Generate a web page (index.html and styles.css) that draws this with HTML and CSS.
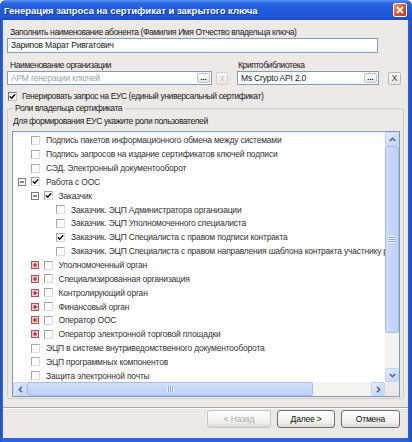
FILE: index.html
```html
<!DOCTYPE html>
<html lang="ru">
<head>
<meta charset="utf-8">
<title>Генерация запроса</title>
<link rel="stylesheet" href="styles.css">
</head>
<body>
<div class="window">
  <div class="titlebar">
    <span class="title">Генерация запроса на сертификат и закрытого ключа</span>
    <span class="close"><svg width="8" height="8" viewBox="0 0 8 8"><path d="M1 1L7 7M7 1L1 7" stroke="#fff" stroke-width="1.8" fill="none"/></svg></span>
  </div>
  <div class="client">
    <div class="label l1">Заполнить наименование абонента (Фамилия Имя Отчество владельца ключа)</div>
    <div class="textbox tb1">Зарипов Марат Ривгатович</div>
    <div class="pickers">
      <div class="picker org">
        <div class="label plabel">Наименование организации</div>
        <div class="pick-row">
          <div class="textbox combo"><span class="val muted">АРМ генерации ключей</span><span class="dots">...</span></div>
          <span class="xbtn disabled">x</span>
        </div>
      </div>
      <div class="picker crypto">
        <div class="label plabel">Криптобиблиотека</div>
        <div class="pick-row">
          <div class="textbox combo"><span class="val">Ms Crypto API 2.0</span><span class="dots">...</span></div>
          <span class="xbtn">X</span>
        </div>
      </div>
    </div>
    <div class="check-row"><span class="cb on"><svg width="7" height="7" viewBox="0 0 7 7"><path d="M0.8 3.3L2.7 5.2L6.2 1.2" stroke="#111" stroke-width="1.5" fill="none"/></svg></span><span>Генерировать запрос на ЕУС (единый универсальный сертификат)</span></div>
    <fieldset class="group">
      <legend>Роли владельца сертификата</legend>
      <div class="hint">Для формирования ЕУС укажите роли пользователей</div>
      <div class="tree">
        <div class="tree-body">
          <div class="row lvl0"><span class="exp"></span><span class="cb"></span><span class="txt">Подпись пакетов информационного обмена между системами</span></div>
          <div class="row lvl0"><span class="exp"></span><span class="cb"></span><span class="txt">Подпись запросов на издание сертификатов ключей подписи</span></div>
          <div class="row lvl0"><span class="exp"></span><span class="cb"></span><span class="txt">СЭД. Электронный документооборот</span></div>
          <div class="row lvl0"><span class="exp"><svg width="8" height="8" viewBox="0 0 8 8"><rect x="0.5" y="0.5" width="7" height="7" fill="#fff" stroke="#7b7b7b"/><path d="M2 4H6" stroke="#111"/></svg></span><span class="cb on"><svg width="7" height="7" viewBox="0 0 7 7"><path d="M0.8 3.3L2.7 5.2L6.2 1.2" stroke="#111" stroke-width="1.5" fill="none"/></svg></span><span class="txt">Работа с ООС</span></div>
          <div class="row lvl1"><span class="exp"><svg width="8" height="8" viewBox="0 0 8 8"><rect x="0.5" y="0.5" width="7" height="7" fill="#fff" stroke="#7b7b7b"/><path d="M2 4H6" stroke="#111"/></svg></span><span class="cb on"><svg width="7" height="7" viewBox="0 0 7 7"><path d="M0.8 3.3L2.7 5.2L6.2 1.2" stroke="#111" stroke-width="1.5" fill="none"/></svg></span><span class="txt">Заказчик</span></div>
          <div class="row lvl2"><span class="exp"></span><span class="cb"></span><span class="txt">Заказчик. ЭЦП Администратора организации</span></div>
          <div class="row lvl2"><span class="exp"></span><span class="cb"></span><span class="txt">Заказчик. ЭЦП Уполномоченного специалиста</span></div>
          <div class="row lvl2"><span class="exp"></span><span class="cb on"><svg width="7" height="7" viewBox="0 0 7 7"><path d="M0.8 3.3L2.7 5.2L6.2 1.2" stroke="#111" stroke-width="1.5" fill="none"/></svg></span><span class="txt">Заказчик. ЭЦП Специалиста с правом подписи контракта</span></div>
          <div class="row lvl2"><span class="exp"></span><span class="cb"></span><span class="txt">Заказчик. ЭЦП Специалиста с правом направления шаблона контракта участнику размещения заказа</span></div>
          <div class="row lvl1"><span class="exp"><svg width="8" height="8" viewBox="0 0 8 8"><rect x="0.5" y="0.5" width="7" height="7" fill="#f4c4c6" stroke="#a8545a"/><path d="M2 4H6M4 2V6" stroke="#9a1020"/></svg></span><span class="cb"></span><span class="txt">Уполномоченный орган</span></div>
          <div class="row lvl1"><span class="exp"><svg width="8" height="8" viewBox="0 0 8 8"><rect x="0.5" y="0.5" width="7" height="7" fill="#f4c4c6" stroke="#a8545a"/><path d="M2 4H6M4 2V6" stroke="#9a1020"/></svg></span><span class="cb"></span><span class="txt">Специализированная организация</span></div>
          <div class="row lvl1"><span class="exp"><svg width="8" height="8" viewBox="0 0 8 8"><rect x="0.5" y="0.5" width="7" height="7" fill="#f4c4c6" stroke="#a8545a"/><path d="M2 4H6M4 2V6" stroke="#9a1020"/></svg></span><span class="cb"></span><span class="txt">Контролирующий орган</span></div>
          <div class="row lvl1"><span class="exp"><svg width="8" height="8" viewBox="0 0 8 8"><rect x="0.5" y="0.5" width="7" height="7" fill="#f4c4c6" stroke="#a8545a"/><path d="M2 4H6M4 2V6" stroke="#9a1020"/></svg></span><span class="cb"></span><span class="txt">Финансовый орган</span></div>
          <div class="row lvl1"><span class="exp"><svg width="8" height="8" viewBox="0 0 8 8"><rect x="0.5" y="0.5" width="7" height="7" fill="#f4c4c6" stroke="#a8545a"/><path d="M2 4H6M4 2V6" stroke="#9a1020"/></svg></span><span class="cb"></span><span class="txt">Оператор ООС</span></div>
          <div class="row lvl1"><span class="exp"><svg width="8" height="8" viewBox="0 0 8 8"><rect x="0.5" y="0.5" width="7" height="7" fill="#f4c4c6" stroke="#a8545a"/><path d="M2 4H6M4 2V6" stroke="#9a1020"/></svg></span><span class="cb"></span><span class="txt">Оператор электронной торговой площадки</span></div>
          <div class="row lvl0"><span class="exp"></span><span class="cb"></span><span class="txt">ЭЦП в системе внутриведомственного документооборота</span></div>
          <div class="row lvl0"><span class="exp"></span><span class="cb"></span><span class="txt">ЭЦП программных компонентов</span></div>
          <div class="row lvl0"><span class="exp"></span><span class="cb"></span><span class="txt">Защита электронной почты</span></div>
        </div>
        <div class="vscroll">
          <span class="sbtn"><svg width="7" height="5" viewBox="0 0 7 5"><path d="M0.8 4L3.5 1.3L6.2 4" stroke="#4d6185" stroke-width="1.5" fill="none"/></svg></span>
          <span class="thumb vthumb"><span class="grip vgrip"></span></span>
          <span class="track"></span>
          <span class="sbtn"><svg width="7" height="5" viewBox="0 0 7 5"><path d="M0.8 1L3.5 3.7L6.2 1" stroke="#4d6185" stroke-width="1.5" fill="none"/></svg></span>
        </div>
        <div class="hscroll">
          <span class="sbtn"><svg width="5" height="7" viewBox="0 0 5 7"><path d="M4 0.8L1.3 3.5L4 6.2" stroke="#4d6185" stroke-width="1.5" fill="none"/></svg></span>
          <span class="thumb hthumb"><span class="grip hgrip"></span></span>
          <span class="track"></span>
          <span class="sbtn"><svg width="5" height="7" viewBox="0 0 5 7"><path d="M1 0.8L3.7 3.5L1 6.2" stroke="#4d6185" stroke-width="1.5" fill="none"/></svg></span>
        </div>
        <div class="corner"></div>
      </div>
    </fieldset>
    <div class="sep"></div>
    <div class="buttons">
      <span class="btn back disabled">&lt; Назад</span>
      <span class="btn next">Далее &gt;</span>
      <span class="btn cancel">Отмена</span>
    </div>
  </div>
</div>
</body>
</html>
```
FILE: styles.css
```css
* { box-sizing: border-box; }
html, body { margin: 0; padding: 0; }
body {
  width: 412px;
  height: 442px;
  overflow: hidden;
  background: #fff;
  font-family: "Liberation Sans", Arial, sans-serif;
  font-size: 8.5px;
  color: #202020;
}
.window {
  width: 412px;
  height: 442px;
  display: flex;
  flex-direction: column;
  background: linear-gradient(90deg, #1a4cc4 0, #2c62dc 2px, #2c62dc 408px, #1a4cc4 100%);
  border-radius: 6px 6px 0 0;
  overflow: hidden;
}
.titlebar {
  height: 20px;
  flex: none;
  display: flex;
  align-items: center;
  justify-content: space-between;
  padding: 0 5px 0 4px;
  background: linear-gradient(#5b93f0 0, #2d68e2 3px, #215cdc 45%, #1e57d6 80%, #1a4dc6 100%);
}
.title {
  color: #fff;
  font-weight: bold;
  font-size: 9.5px;
  letter-spacing: 0;
  text-shadow: 1px 1px 0 #0e3595;
  white-space: nowrap;
}
.close {
  width: 14px;
  height: 14px;
  border: 1px solid #f4f4f4;
  border-radius: 2px;
  background: linear-gradient(135deg, #f39a78, #dc5126 55%, #c43d16);
  display: flex;
  align-items: center;
  justify-content: center;
}
.client {
  flex: 1;
  margin: 0 4px 4px 3px;
  background: #ece9e6;
  display: flex;
  flex-direction: column;
  padding: 6px 0 0 4px;
  letter-spacing: -0.4px;
}
.label {
  line-height: 12px;
  white-space: nowrap;
}
.l1 { padding-left: 3px; }
.textbox {
  background: #fff;
  border: 1px solid #7f9db9;
  white-space: nowrap;
  overflow: hidden;
}
.tb1 {
  width: 371px;
  height: 15px;
  line-height: 13px;
  padding-left: 3px;
  letter-spacing: -0.2px;
}
.pickers {
  display: flex;
  margin-top: 6px;
}
.picker.org { width: 221px; }
.picker.crypto { margin-left: 9px; width: 165px; }
.org .plabel { padding-left: 3px; }
.crypto .plabel { padding-left: 1px; }
.pick-row {
  display: flex;
  align-items: center;
  height: 14px;
}
.combo {
  display: flex;
  height: 14px;
  line-height: 12px;
  letter-spacing: -0.2px;
}
.org .combo { width: 205px; }
.crypto .combo { width: 142px; }
.combo .val { flex: 1; padding-left: 3px; overflow: hidden; }
.muted { color: #a3a3a3; }
.dots {
  width: 13px;
  margin: 1px;
  border: 1px solid #c3c3c3;
  border-radius: 2px;
  background: linear-gradient(#fdfdfd, #e6e4df);
  font-weight: bold;
  font-size: 8px;
  letter-spacing: 0;
  line-height: 7px;
  text-align: center;
  color: #222;
}
.xbtn {
  height: 13px;
  border: 1px solid #b9b8b4;
  border-radius: 2px;
  background: linear-gradient(#fbfbfa, #e9e7e2);
  text-align: center;
  line-height: 11px;
  font-size: 8.5px;
  letter-spacing: 0;
  color: #333;
}
.org .xbtn { width: 12px; margin-left: 4px; }
.crypto .xbtn { width: 13px; margin-left: 9px; }
.xbtn.disabled { color: #bdbcb7; border-color: #d2d0cb; }
.check-row {
  display: flex;
  align-items: center;
  height: 12px;
  margin-top: 5px;
  white-space: nowrap;
}
.cb {
  width: 9px;
  height: 9px;
  flex: none;
  background: #fff;
  border: 1px solid #a5a5a5;
  border-right-color: #dcdcdc;
  border-bottom-color: #dcdcdc;
  display: flex;
  align-items: center;
  justify-content: center;
}
.check-row .cb { margin-left: 1px; margin-right: 5px; border-color: #707070; border-right-color: #c8c8c8; border-bottom-color: #c8c8c8; }
.group {
  margin: 0;
  width: 397px;
  min-inline-size: 0;
  padding: 0 3px 1px 4px;
  border: 1px solid #cfcdc5;
  border-radius: 3px;
}
.group legend {
  padding: 0 2px;
  margin-left: 1px;
  line-height: 12px;
  font-size: 8.5px;
}
.hint {
  margin-top: 1px;
  margin-left: 1px;
  line-height: 12px;
  white-space: nowrap;
}
.tree {
  margin-top: 4px;
  height: 266px;
  border: 1px solid #7f9db9;
  background: #fff;
  display: grid;
  grid-template-columns: 1fr 14px;
  grid-template-rows: 1fr 14px;
  overflow: hidden;
}
.tree-body {
  overflow: hidden;
  padding-top: 1.5px;
  color: #333;
  min-width: 0;
  letter-spacing: -0.2px;
}
.row {
  height: 13.85px;
  display: flex;
  align-items: center;
  white-space: nowrap;
}
.lvl0 { padding-left: 5px; }
.lvl1 { padding-left: 17.5px; }
.lvl2 { padding-left: 30px; }
.exp {
  width: 13px;
  flex: none;
  display: flex;
  align-items: center;
}
.exp svg { display: block; }
.row .cb { margin-right: 6px; }
.txt { line-height: 12px; }
.vscroll, .hscroll {
  display: flex;
  background: #f4f3ee;
}
.vscroll { flex-direction: column; }
.sbtn {
  width: 14px;
  height: 14px;
  flex: none;
  border: 1px solid #c4d3f6;
  border-radius: 2px;
  background: linear-gradient(135deg, #e4ecfd, #c3d4fb);
  display: flex;
  align-items: center;
  justify-content: center;
}
.thumb {
  flex: none;
  border: 1px solid #a8bdef;
  border-radius: 2px;
  background: linear-gradient(90deg, #d0ddfb, #bed0f8);
  display: flex;
  align-items: center;
  justify-content: center;
}
.vthumb { height: 187px; width: 14px; }
.hthumb { width: 286px; height: 14px; background: linear-gradient(#d3e0fc, #bccef8); }
.track { flex: 1; }
.grip { display: block; }
.vgrip {
  width: 6px;
  height: 7px;
  background: repeating-linear-gradient(#eef3fe 0 1px, #8fa8e0 1px 2px);
}
.hgrip {
  width: 7px;
  height: 6px;
  background: repeating-linear-gradient(90deg, #eef3fe 0 1px, #8fa8e0 1px 2px);
}
.corner { background: #ece9e6; }
.sep {
  margin-top: 8px;
  margin-left: -4px;
  height: 2px;
  border-top: 1px solid #a9a7a2;
  border-bottom: 1px solid #fff;
}
.buttons {
  display: flex;
  justify-content: flex-end;
  gap: 6px;
  margin-top: 1px;
  padding-right: 8px;
  letter-spacing: -0.2px;
}
.btn {
  height: 18px;
  border: 1px solid #6f6e6b;
  border-radius: 3px;
  background: linear-gradient(#ffffff, #f1f0ec 70%, #dcd8cf);
  text-align: center;
  line-height: 16px;
  color: #111;
}
.back { width: 64px; }
.next { width: 58px; }
.cancel { width: 59px; }
.btn.disabled { color: #aeaca5; border-color: #c9c7c1; }
```
